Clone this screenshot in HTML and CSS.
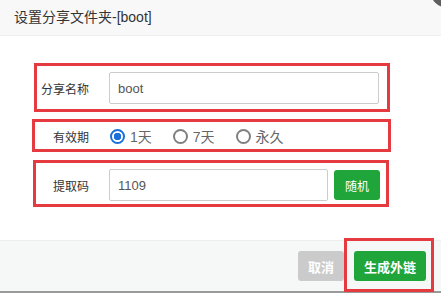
FILE: index.html
```html
<!DOCTYPE html>
<html lang="zh-CN">
<head>
    <meta charset="UTF-8">
    <title>设置分享文件夹</title>
    <link rel="stylesheet" href="styles.css">
</head>
<body>

    <div class="dialog">
        <div class="dialog-title">设置分享文件夹-[boot]</div>
        <span class="dialog-close"></span>

        <div class="dialog-body">
            <div class="form-row">
                <label class="form-label">分享名称</label>
                <input class="form-input" type="text" value="boot">
            </div>
            <div class="form-row">
                <label class="form-label">有效期</label>
                <div class="radio-group">
                    <label class="radio"><input type="radio" name="expire" checked> 1天</label>
                    <label class="radio"><input type="radio" name="expire"> 7天</label>
                    <label class="radio"><input type="radio" name="expire"> 永久</label>
                </div>
            </div>
            <div class="form-row code-row">
                <label class="form-label">提取码</label>
                <input class="form-input short" type="text" value="1109">
                <button class="btn btn-green btn-small">随机</button>
            </div>
        </div>

        <div class="dialog-footer">
            <button class="btn btn-grey">取消</button>
            <button class="btn btn-green">生成外链</button>
        </div>
    </div>

    <!-- 标注框 -->
    <div class="mark mark-name"></div>
    <div class="mark mark-expire"></div>
    <div class="mark mark-code"></div>
    <div class="mark mark-submit"></div>

</body>
</html>
```

FILE: styles.css
```css
body {
    margin: 0;
    background: #fff;
    font-family: "Liberation Sans", "Noto Sans CJK SC", sans-serif;
    color: #333;
    overflow: hidden;
}

.dialog {
    position: relative;
    width: 441px;
    height: 293px;
    overflow: hidden;
}

.dialog-title {
    height: 35px;
    line-height: 35px;
    padding-left: 14px;
    font-size: 14px;
    color: #333;
    background: #f8f8f8;
    border-bottom: 1px solid #eee;
}

.dialog-close {
    position: absolute;
    top: -28px;
    right: -25px;
    width: 36px;
    height: 36px;
    border-radius: 50%;
    background: #5f5f5f;
}

.dialog-body {
    box-sizing: border-box;
    height: 168px;
    padding-top: 36px;
    display: flex;
    flex-direction: column;
    gap: 16px;
}

.form-row {
    display: flex;
    align-items: center;
    height: 32px;
}

.code-row {
    margin-top: 1px;
}

.form-label {
    flex: none;
    width: 109px;
    padding-right: 20px;
    box-sizing: border-box;
    text-align: right;
    font-size: 12px;
    color: #333;
}

.form-input {
    width: 270px;
    height: 32px;
    box-sizing: border-box;
    border: 1px solid #ccc;
    border-radius: 2px;
    padding: 0 8px;
    font-family: inherit;
    font-size: 13px;
    color: #555;
    outline: none;
}

.form-input.short {
    width: 219px;
    margin-right: 6px;
}

.radio-group {
    display: flex;
    align-items: center;
    gap: 20px;
}

.radio {
    display: flex;
    align-items: center;
    gap: 5px;
    font-size: 14px;
    color: #666;
}

.radio input {
    appearance: none;
    margin: 0 0 0 1px;
    width: 15px;
    height: 15px;
    border: 2px solid #808080;
    border-radius: 50%;
    box-sizing: border-box;
}

.radio input:checked {
    border-color: #1a6fd8;
    background: radial-gradient(circle, #1a6fd8 0 3.5px, #fff 4px);
}

.btn {
    height: 30px;
    border: none;
    border-radius: 3px;
    padding: 0 10px;
    font-family: inherit;
    font-size: 13px;
    font-weight: bold;
    color: #fff;
}

.btn-small {
    flex: none;
    padding: 0 11px;
    font-size: 12px;
    font-weight: normal;
}

.btn-green {
    background: #20a53a;
}

.btn-grey {
    background: #cbcbcb;
}

.dialog-footer {
    height: 53px;
    margin-top: 36px;
    box-sizing: border-box;
    background: #f6f8f8;
    border-top: 1px solid #eee;
    border-bottom: 2px solid #9a9a9a;
    display: flex;
    justify-content: flex-end;
    align-items: center;
    gap: 10px;
    padding-right: 15px;
}

.mark {
    position: absolute;
    border: 3px solid #e53a3f;
    box-sizing: border-box;
}

.mark-name {
    left: 34px;
    top: 63px;
    width: 356px;
    height: 49px;
}

.mark-expire {
    left: 32px;
    top: 119px;
    width: 359px;
    height: 33px;
}

.mark-code {
    left: 33px;
    top: 160px;
    width: 356px;
    height: 47px;
}

.mark-submit {
    left: 344px;
    top: 238px;
    width: 90px;
    height: 54px;
}
```
